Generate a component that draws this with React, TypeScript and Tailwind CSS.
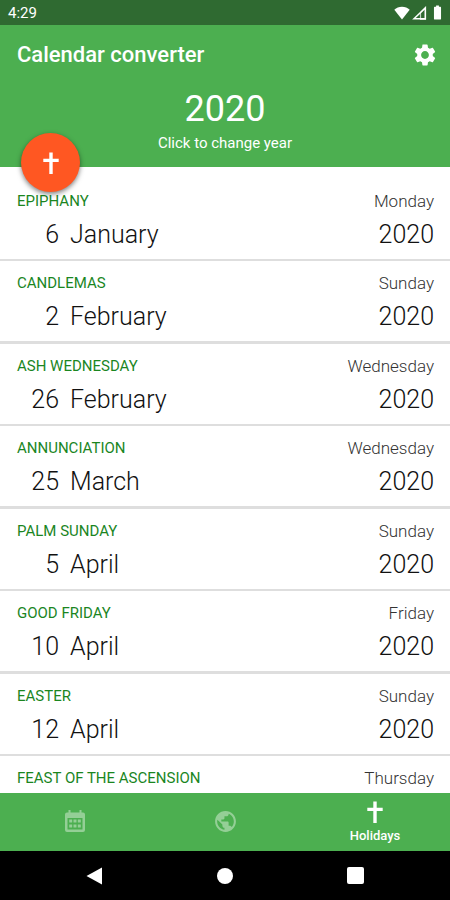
import { useState } from "react";
import { MdBatteryFull, MdPublic, MdSettings } from "react-icons/md";

type Holiday = {
  name: string;
  weekday: string;
  date?: { day: number; month: string };
};

const YEAR = 2020;

const HOLIDAYS: Holiday[] = [
  { name: "Epiphany", weekday: "Monday", date: { day: 6, month: "January" } },
  { name: "Candlemas", weekday: "Sunday", date: { day: 2, month: "February" } },
  { name: "Ash Wednesday", weekday: "Wednesday", date: { day: 26, month: "February" } },
  { name: "Annunciation", weekday: "Wednesday", date: { day: 25, month: "March" } },
  { name: "Palm Sunday", weekday: "Sunday", date: { day: 5, month: "April" } },
  { name: "Good Friday", weekday: "Friday", date: { day: 10, month: "April" } },
  { name: "Easter", weekday: "Sunday", date: { day: 12, month: "April" } },
  { name: "Feast of the Ascension", weekday: "Thursday" },
];

type Tab = "calendar" | "world" | "holidays";

export default function App() {
  const [tab, setTab] = useState<Tab>("holidays");

  return (
    <div className="flex h-screen flex-col overflow-hidden bg-white font-[Roboto,sans-serif] text-[#111111]">
      <StatusBar />
      <Header />
      <main className="min-h-0 flex-1 overflow-hidden pt-3">
        <ul>
          {HOLIDAYS.map((h) => (
            <HolidayRow key={h.name} holiday={h} />
          ))}
        </ul>
      </main>
      <TabBar tab={tab} onChange={setTab} />
      <SystemNav />
    </div>
  );
}

function StatusBar() {
  return (
    <div className="flex h-[25px] shrink-0 items-center justify-between bg-[#2f6a31] pr-1 pl-2 text-white">
      <span className="text-[15px] leading-5">4:29</span>
      <div className="flex items-center gap-0.5" aria-hidden="true">
        <svg viewBox="0 0 16 14" className="h-3.5 w-4" fill="currentColor">
          <path d="M8 13.5 0.3 3.8C2.3 1.9 5 0.8 8 0.8s5.7 1.1 7.7 3z" />
        </svg>
        <svg viewBox="0 0 15 14" className="h-3.5 w-[15px]" fill="none" stroke="currentColor">
          <path d="M13.3 2v10.8H2z" strokeWidth="1.5" />
          <path d="M8.5 6.5 13.5 1.5v11.8H8.5z" strokeWidth="1.2" opacity="0.7" />
        </svg>
        <MdBatteryFull size={17} />
      </div>
    </div>
  );
}

function Header() {
  return (
    <header className="relative shrink-0 bg-[#4caf50] text-white">
      <div className="flex h-[60px] items-center justify-between pr-3 pl-[17px]">
        <h1 className="text-[22px] leading-7 font-medium">Calendar converter</h1>
        <button type="button" aria-label="Settings">
          <MdSettings size={26} />
        </button>
      </div>
      <button type="button" className="mx-auto flex h-[82px] flex-col items-center">
        <span className="text-[36px] leading-12">{YEAR}</span>
        <span className="text-[15px] leading-5">Click to change year</span>
      </button>
      {/* Floating button straddles the header's lower edge */}
      <button
        type="button"
        aria-label="Choose religion"
        className="absolute -bottom-[25px] left-[21px] flex size-[59px] items-center justify-center rounded-full bg-[#ff5722] shadow-[0_2px_5px_rgba(0,0,0,0.5)]"
      >
        <CrossIcon />
      </button>
    </header>
  );
}

function HolidayRow({ holiday }: { holiday: Holiday }) {
  const { name, weekday, date } = holiday;
  return (
    <li className="border-b-2 border-[#dedede] pt-2.5 pr-4 pb-1.5 pl-[17px] even:border-b-3">
      <div className="flex items-center justify-between leading-6">
        <h2 className="text-[15px] text-[#1b861f] uppercase">{name}</h2>
        <span className="text-[17px] font-light text-[#333333]">{weekday}</span>
      </div>
      {date && (
        <div className="flex pt-1 text-[25px] leading-9 font-light">
          <span className="w-[42px] text-right">{date.day}</span>
          <span className="ml-[11px]">{date.month}</span>
          <span className="ml-auto">{YEAR}</span>
        </div>
      )}
    </li>
  );
}

function TabBar({ tab, onChange }: { tab: Tab; onChange: (t: Tab) => void }) {
  const tabs = [
    { id: "calendar" as const, label: "Calendar", icon: <CalendarIcon /> },
    { id: "world" as const, label: "World", icon: <MdPublic size={25} /> },
    { id: "holidays" as const, label: "Holidays", icon: <CrossIcon /> },
  ];

  return (
    <nav className="grid h-[58px] shrink-0 grid-cols-3 bg-[#4caf50] text-white">
      {tabs.map((t) => {
        const active = t.id === tab;
        return (
          <button
            key={t.id}
            type="button"
            aria-label={t.label}
            onClick={() => onChange(t.id)}
            className={`flex flex-col items-center justify-center ${active ? "pt-1" : "pb-0.5 opacity-40"}`}
          >
            {t.icon}
            {active && <span className="text-[13px] leading-6 font-medium">{t.label}</span>}
          </button>
        );
      })}
    </nav>
  );
}

function SystemNav() {
  return (
    <div className="flex h-[49px] shrink-0 items-center justify-center gap-[114px] bg-black text-white">
      <button type="button" aria-label="Back">
        <svg viewBox="0 0 17 18" className="h-[18px] w-[17px]" fill="currentColor">
          <path d="M16 .5v17L.5 9z" />
        </svg>
      </button>
      <button type="button" aria-label="Home" className="size-4 rounded-full bg-white" />
      <button type="button" aria-label="Recent apps" className="size-[17px] rounded-xs bg-white" />
    </div>
  );
}

function CrossIcon() {
  return (
    <svg viewBox="0 0 24 24" className="size-6" fill="currentColor" aria-hidden="true">
      <path d="M10.3 1.5h3.4v6.2h6v3.2h-6v12h-3.4v-12h-6V7.7h6z" />
    </svg>
  );
}

function CalendarIcon() {
  return (
    <svg viewBox="0 0 24 24" className="size-6" fill="currentColor" aria-hidden="true">
      <path
        fillRule="evenodd"
        d="M5.5 1h2v2.5h9V1h2v2.5H20a2 2 0 0 1 2 2V21a2 2 0 0 1-2 2H4a2 2 0 0 1-2-2V5.5a2 2 0 0 1 2-2h1.5zM4.5 9v11.5h15V9z"
      />
      <path d="M6.2 10.5h3v3h-3zM10.5 10.5h3v3h-3zM14.8 10.5h3v3h-3zM6.2 15.5h3v3h-3zM10.5 15.5h3v3h-3zM14.8 15.5h3v3h-3z" />
    </svg>
  );
}
